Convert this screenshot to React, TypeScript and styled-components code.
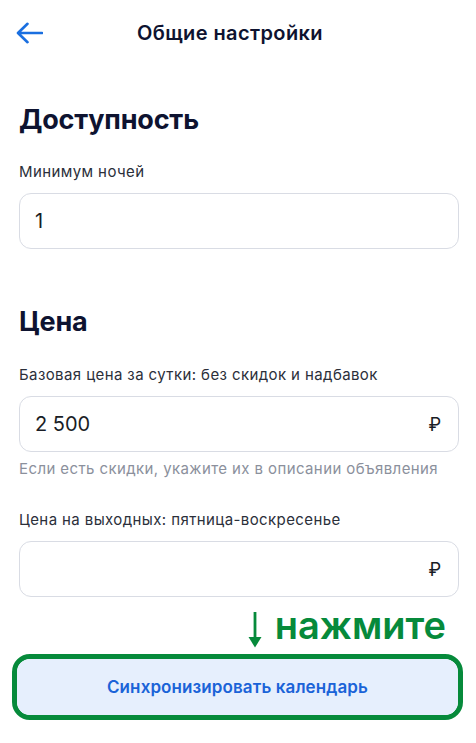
import * as React from 'react'
import styled, { createGlobalStyle } from 'styled-components'

const GlobalStyle = createGlobalStyle`
    html, body {
        margin: 0;
        padding: 0;
        background: #ffffff;
    }
    body {
        font-family: 'Inter', 'Roboto', sans-serif;
        -webkit-font-smoothing: antialiased;
    }
`

const Page = styled.div`
    width: 476px;
    min-height: 743px;
    background: #ffffff;
    display: flex;
    flex-direction: column;
`

const Header = styled.div`
    height: 66px;
    display: flex;
    align-items: center;
    padding-left: 16px;
`

const BackButton = styled.div`
    width: 27px;
    height: 24px;
    display: flex;
    align-items: center;
    cursor: pointer;
`

const HeaderTitle = styled.span`
    margin-left: 94px;
    font-size: 20px;
    font-weight: 600;
    color: #0e1330;
    letter-spacing: 0.4px;
`

const Content = styled.div`
    display: flex;
    flex-direction: column;
    padding: 0 17px 0 19px;
`

const SectionTitle = styled.h2<{ $top: number }>`
    margin: ${p => p.$top}px 0 0;
    font-size: 27px;
    line-height: 32px;
    font-weight: 700;
    color: #0e1330;
    letter-spacing: -0.2px;
`

const Label = styled.div<{ $top: number }>`
    margin-top: ${p => p.$top}px;
    font-size: 15px;
    line-height: 20px;
    color: #2b2f3a;
    letter-spacing: 0.4px;
`

const Field = styled.div`
    margin-top: 11px;
    height: 56px;
    box-sizing: border-box;
    border: 1px solid #d9dce4;
    border-radius: 12px;
    display: flex;
    align-items: center;
    justify-content: space-between;
    padding: 0 17px 0 15px;
`

const FieldValue = styled.span`
    font-size: 20px;
    color: #1a1d26;
`

const Currency = styled.span`
    font-size: 18px;
    color: #1a1d26;
`

const Hint = styled.div`
    margin-top: 7px;
    font-size: 15px;
    line-height: 20px;
    color: #8b909c;
    letter-spacing: 0.4px;
`

const CalloutRow = styled.div`
    margin-top: 8px;
    display: flex;
    justify-content: flex-end;
    align-items: flex-end;
    gap: 13px;
    padding-right: 30px;
`

const CalloutText = styled.span`
    font-size: 38px;
    line-height: 40px;
    font-weight: 600;
    color: #068a3b;
`

const ArrowWrap = styled.div`
    width: 14px;
    height: 36px;
    margin-bottom: -3px;
`

const SyncOuter = styled.div`
    margin: 9px 13px 0 12px;
    border: 5px solid #068a3b;
    border-radius: 18px;
    overflow: hidden;
`

const SyncButton = styled.button`
    width: 100%;
    height: 56px;
    border: none;
    border-radius: 12px;
    background: #e6effd;
    color: #1a63d8;
    font-family: 'Inter', 'Roboto', sans-serif;
    font-size: 17px;
    font-weight: 600;
    letter-spacing: 0.1px;
    cursor: pointer;
`

const BackIcon = () => (
    <svg width="27" height="22" viewBox="0 0 27 22" fill="none">
        <path d="M26 11H2.5M11.5 1.8L2 11l9.5 9.2" stroke="#1a6fe0" strokeWidth="2.6" strokeLinecap="round" strokeLinejoin="round" />
    </svg>
)

const DownArrow = () => (
    <svg width="14" height="36" viewBox="0 0 14 36" fill="none">
        <rect x="5.6" y="0" width="2.8" height="26" fill="#068a3b" />
        <path d="M0.5 25h13L7 35.5z" fill="#068a3b" />
    </svg>
)

export default function App() {
    return (
        <Page>
            <GlobalStyle />
            <Header>
                <BackButton>
                    <BackIcon />
                </BackButton>
                <HeaderTitle>Общие настройки</HeaderTitle>
            </Header>
            <Content>
                <SectionTitle $top={38}>Доступность</SectionTitle>
                <Label $top={26}>Минимум ночей</Label>
                <Field>
                    <FieldValue>1</FieldValue>
                </Field>

                <SectionTitle $top={57}>Цена</SectionTitle>
                <Label $top={27}>Базовая цена за сутки: без скидок и надбавок</Label>
                <Field>
                    <FieldValue>2 500</FieldValue>
                    <Currency>₽</Currency>
                </Field>
                <Hint>Если есть скидки, укажите их в описании объявления</Hint>

                <Label $top={31}>Цена на выходных: пятница-воскресенье</Label>
                <Field>
                    <FieldValue />
                    <Currency>₽</Currency>
                </Field>
            </Content>
            <CalloutRow>
                <ArrowWrap>
                    <DownArrow />
                </ArrowWrap>
                <CalloutText>нажмите</CalloutText>
            </CalloutRow>
            <SyncOuter>
                <SyncButton>Синхронизировать календарь</SyncButton>
            </SyncOuter>
        </Page>
    )
}
